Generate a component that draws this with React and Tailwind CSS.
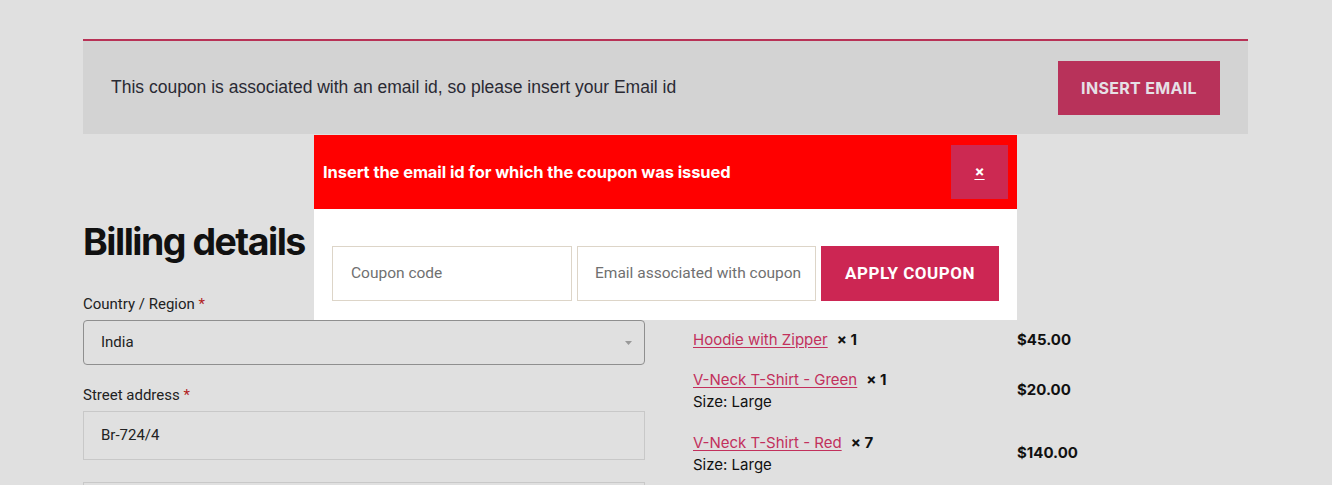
export default function App() {
  return (
    <div className="relative min-h-[485px] w-[1332px] overflow-hidden bg-[#e0e0e0]" style={{ height: 485 }}>
      <div className="ml-[83px] w-[1165px] pt-[39px]">
        {/* Notice bar */}
        <div className="flex h-[95px] items-center justify-between border-t-2 border-[#b83256] bg-[#d3d3d3] pl-7 pr-7">
          <p className="font-['Liberation_Sans',Arial,sans-serif] text-[17.5px] text-[#2a2a33]">
            This coupon is associated with an email id, so please insert your Email id
          </p>
          <button className="flex h-[54px] w-[162px] items-center justify-center bg-[#b8325a] font-['Inter',sans-serif] text-[16px] font-bold uppercase tracking-[0.02em] text-[#e6e0e6]">
            Insert Email
          </button>
        </div>

        {/* Main two columns */}
        <div className="flex pt-[84px]">
          <div className="w-[562px]">
            <h2 className="font-['Inter',sans-serif] text-[37.5px] font-bold leading-[48px] tracking-[-0.04em] text-[#111111]">
              Billing details
            </h2>
            <div className="pt-[28px]">
              <label className="block font-['Roboto',sans-serif] text-[15px] leading-[20px] text-[#222]">
                Country / Region <span className="text-[#b22222]">*</span>
              </label>
              <div className="mt-[6px] flex h-[45px] items-center justify-between rounded-[4px] border border-[#8f8f8f] pl-[17px] pr-[12px]">
                <span className="font-['Roboto',sans-serif] text-[15px] text-[#222]">India</span>
                <svg width="7" height="4" viewBox="0 0 7 4">
                  <path d="M0 0 L7 0 L3.5 4 Z" fill="#999" />
                </svg>
              </div>
            </div>
            <div className="pt-[20px]">
              <label className="block font-['Roboto',sans-serif] text-[15px] leading-[20px] text-[#222]">
                Street address <span className="text-[#b22222]">*</span>
              </label>
              <div className="mt-[6px] flex h-[49px] items-center border border-[#c8c8c8] pl-[17px]">
                <span className="font-['Roboto',sans-serif] text-[15px] text-[#222]">Br-724/4</span>
              </div>
              <div className="mt-[22px] h-[49px] border border-[#c8c8c8]" />
            </div>
          </div>

          <div className="ml-[48px] flex-1 pt-[111px]">
            <div className="flex w-[385px] items-center justify-between">
              <div className="font-['Inter',sans-serif] text-[15px] leading-[22px]">
                <a href="#" className="text-[#c2305c] underline underline-offset-2">Hoodie with Zipper</a>
                <span className="ml-[9px] font-bold text-[#111]">× 1</span>
              </div>
              <span className="w-[61px] font-['Inter',sans-serif] text-[15px] font-bold text-[#111]">$45.00</span>
            </div>
            <div className="mt-[17px] flex w-[385px] items-center justify-between">
              <div className="font-['Inter',sans-serif] text-[15px] leading-[22px]">
                <div>
                  <a href="#" className="text-[#c2305c] underline underline-offset-2">V-Neck T-Shirt - Green</a>
                  <span className="ml-[9px] font-bold text-[#111]">× 1</span>
                </div>
                <div className="text-[#111]">Size: Large</div>
              </div>
              <span className="w-[61px] font-['Inter',sans-serif] text-[15px] font-bold text-[#111]">$20.00</span>
            </div>
            <div className="mt-[19px] flex w-[385px] items-center justify-between">
              <div className="font-['Inter',sans-serif] text-[15px] leading-[22px]">
                <div>
                  <a href="#" className="text-[#c2305c] underline underline-offset-2">V-Neck T-Shirt - Red</a>
                  <span className="ml-[9px] font-bold text-[#111]">× 7</span>
                </div>
                <div className="text-[#111]">Size: Large</div>
              </div>
              <span className="w-[61px] font-['Inter',sans-serif] text-[15px] font-bold text-[#111]">$140.00</span>
            </div>
          </div>
        </div>
      </div>

      {/* Modal */}
      <div className="absolute left-[314px] top-[135px] w-[703px] bg-white">
        <div className="flex h-[74px] items-center justify-between bg-[#ff0000] pl-[9px] pr-[9px]">
          <span className="font-['Inter',sans-serif] text-[16.5px] font-bold tracking-[-0.005em] text-white">
            Insert the email id for which the coupon was issued
          </span>
          <button className="flex h-[54px] w-[57px] items-center justify-center bg-[#cc2952] font-['Inter',sans-serif] text-[15px] font-bold text-white underline underline-offset-2">
            ×
          </button>
        </div>
        <div className="flex h-[111px] items-start gap-[5px] pl-[18px] pr-[18px] pt-[37px]">
          <div className="flex h-[55px] w-[240px] items-center border border-[#ddd5c8] pl-[18px] font-['Roboto',sans-serif] text-[15.5px] text-[#707070]">
            Coupon code
          </div>
          <div className="flex h-[55px] w-[239px] items-center border border-[#ddd5c8] pl-[17px] font-['Roboto',sans-serif] text-[15.5px] text-[#707070]">
            Email associated with coupon
          </div>
          <button className="flex h-[55px] w-[178px] items-center justify-center bg-[#cc2653] font-['Roboto',sans-serif] text-[17px] font-bold uppercase tracking-[0.03em] text-white">
            Apply Coupon
          </button>
        </div>
      </div>
    </div>
  );
}
